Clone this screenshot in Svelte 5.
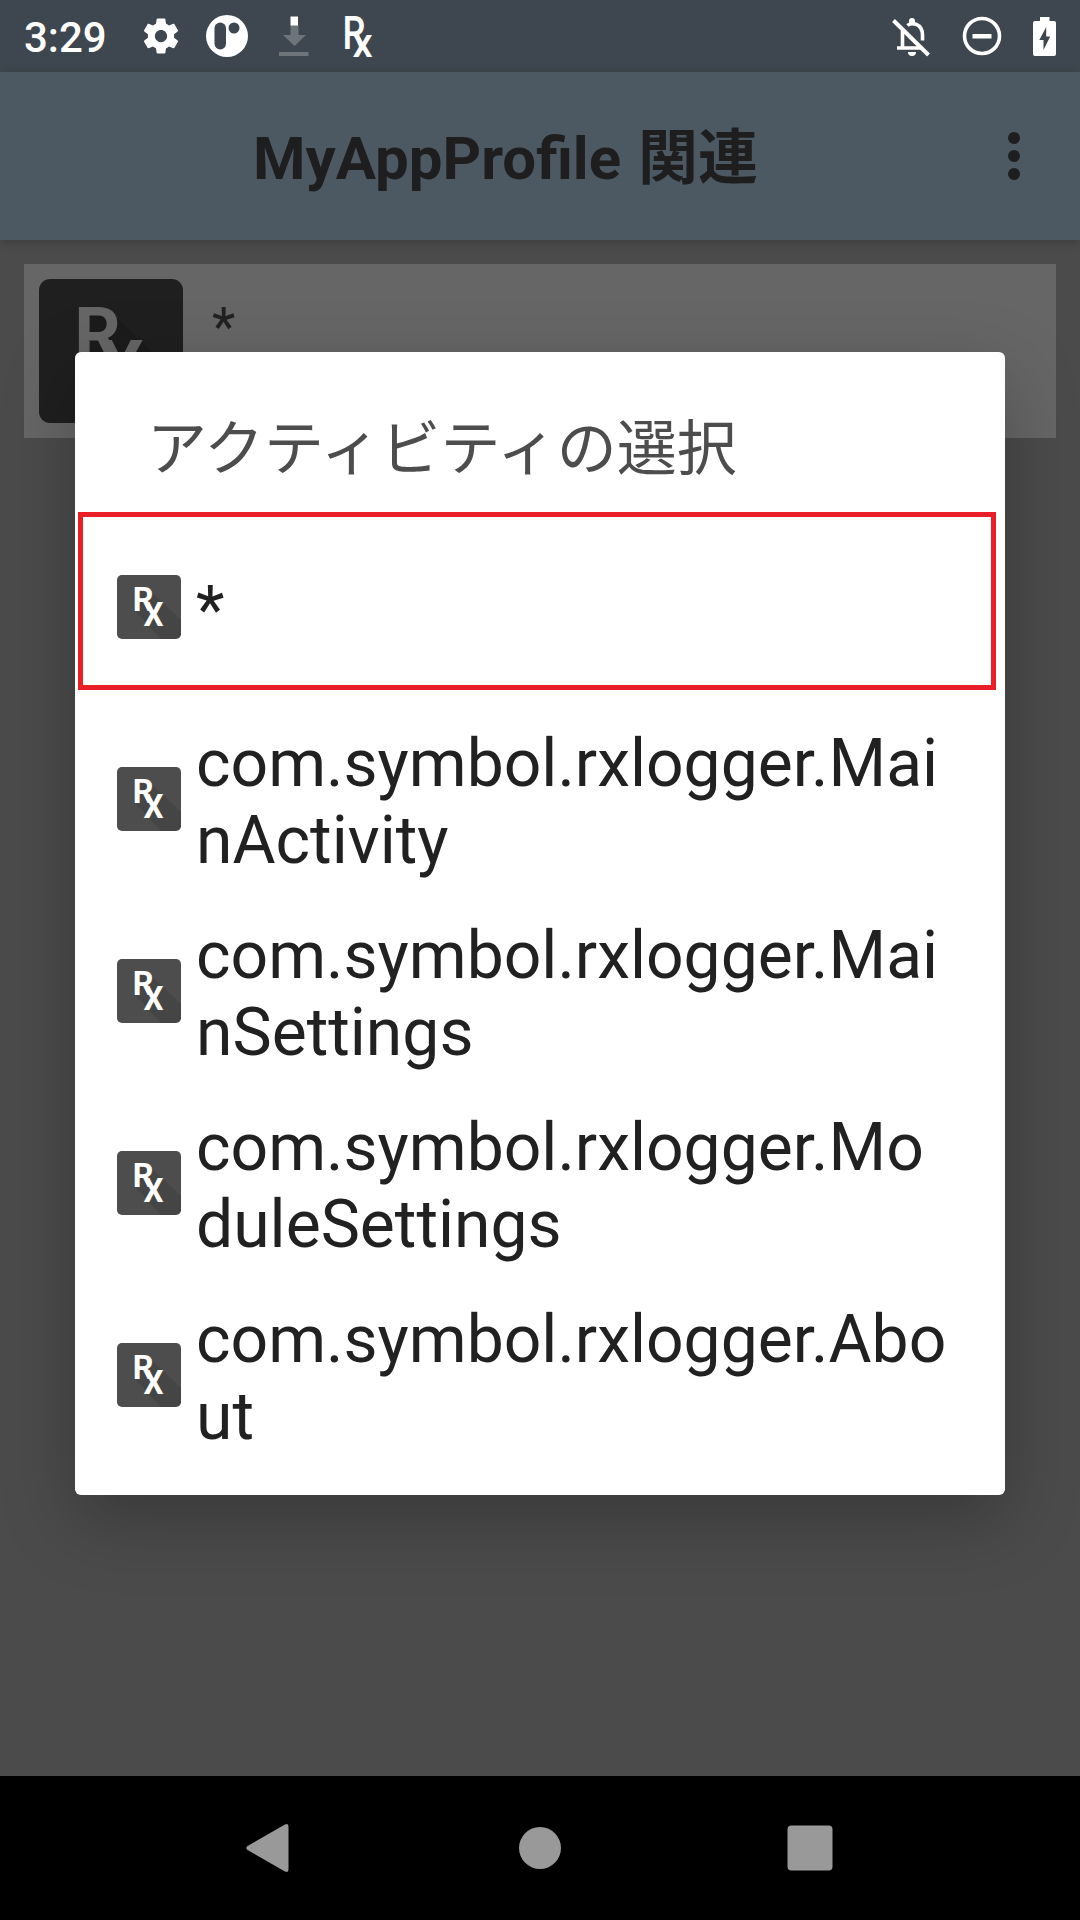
<script>
  const activities = [
    { lines: ['*'], selected: true },
    { lines: ['com.symbol.rxlogger.Mai', 'nActivity'] },
    { lines: ['com.symbol.rxlogger.Mai', 'nSettings'] },
    { lines: ['com.symbol.rxlogger.Mo', 'duleSettings'] },
    { lines: ['com.symbol.rxlogger.Abo', 'ut'] }
  ];
</script>

{#snippet rx()}
  <path class="rx-shade" d="M31 14 L64 45 V58 Q64 64 58 64 H44 L19 37 V14 Z" />
  <text class="rx-letter rx-r" transform="translate(15.700 36) scale(.98 1)">R</text>
  <text class="rx-letter rx-x" transform="translate(26.600 51) scale(.94 1)">X</text>
{/snippet}

<div class="screen">
  <header class="status">
    <span class="clock">3:29</span>
    <svg class="gear" width="42" height="42" viewBox="0 0 24 24"><path fill="#fff" d="M19.43 12.98c.04-.32.07-.64.07-.98s-.03-.66-.07-.98l2.11-1.65c.19-.15.24-.42.12-.64l-2-3.46c-.12-.22-.39-.3-.61-.22l-2.49 1c-.52-.4-1.08-.73-1.69-.98l-.38-2.65C14.46 2.18 14.25 2 14 2h-4c-.25 0-.46.18-.49.42l-.38 2.65c-.61.25-1.17.59-1.69.98l-2.49-1c-.23-.09-.49 0-.61.22l-2 3.46c-.13.22-.07.49.12.64l2.11 1.65c-.04.32-.07.65-.07.98s.03.66.07.98l-2.11 1.65c-.19.15-.24.42-.12.64l2 3.46c.12.22.39.3.61.22l2.49-1c.52.4 1.08.73 1.69.98l.38 2.65c.03.24.24.42.49.42h4c.25 0 .46-.18.49-.42l.38-2.65c.61-.25 1.17-.59 1.69-.98l2.49 1c.23.09.49 0 .61-.22l2-3.46c.12-.22.07-.49-.12-.64l-2.11-1.65zM12 15.5c-1.93 0-3.500-1.570-3.500-3.500s1.570-3.500 3.500-3.500 3.500 1.570 3.500 3.500-1.570 3.500-3.500 3.500z" /></svg>
    <svg class="pr" width="42" height="42" viewBox="0 0 42 42">
      <circle cx="21" cy="21" r="21" fill="#fff" />
      <rect x="8.500" y="7.500" width="11.500" height="27" rx="5.750" fill="#3e474f" />
      <circle cx="28" cy="13" r="5.500" fill="#3e474f" />
    </svg>
    <svg class="down" width="30" height="40" viewBox="0 0 30 40">
      <path fill="#6d747a" d="M11.500 9h8v10h7.500L15.500 30 4 19h7.500zM0 36h29.500v4H0z" />
      <path fill="#fff" d="M11.500 0.500h7.500v9h-7.500z" />
    </svg>
    <svg class="rx-status" width="30" height="44" viewBox="0 0 30 44">
      <text class="thin" transform="translate(-2.500 34.500) scale(.78 1)" font-size="47">R</text>
      <text class="thin" transform="translate(7.500 43) scale(.98 1)" font-size="41">x</text>
    </svg>
    <span class="grow"></span>
    <svg class="bell" width="38" height="40" viewBox="0 0 38 40">
      <g fill="none" stroke="#fff" stroke-width="3.600">
        <path d="M1.500 3.500 36.500 38" stroke-width="4" />
        <path d="M10.500 14V30M5 31H30M15.500 8.500Q19 5.500 24 7.200Q30.500 10 30.500 18V23.500" />
      </g>
      <circle cx="20" cy="4" r="3" fill="#fff" />
      <path fill="#fff" d="M16 35h8q0 4-4 4t-4-4z" />
    </svg>
    <svg class="dnd" width="40" height="40" viewBox="0 0 40 40"><circle cx="20" cy="20" r="17.500" fill="none" stroke="#fff" stroke-width="3.600" /><path fill="#fff" d="M10.500 18h19v4.500h-19z" /></svg>
    <svg class="battery" width="23" height="39" viewBox="0 0 23 39"><path fill="#fff" d="M7 0h9.500v4H21q2 0 2 2v31q0 2-2 2H2q-2 0-2-2V6q0-2 2-2h5z" /><path fill="#3e474f" d="M13.200 10v9.500h4L10.500 33V23H6.300z" /></svg>
  </header>

  <div class="appbar">
    <h1>MyAppProfile 関連</h1>
    <svg class="dots" width="12" height="48" viewBox="0 0 12 48"><g fill="#1e1e1e"><circle cx="6" cy="6" r="6" /><circle cx="6" cy="24" r="6" /><circle cx="6" cy="42" r="6" /></g></svg>
  </div>

  <main>
    <div class="card">
      <svg class="big" width="144" height="144" viewBox="0 0 64 64"><rect width="64" height="64" rx="5" fill="#1f1f1f" />{@render rx()}</svg>
      <span>*</span>
    </div>
  </main>

  <nav>
    <svg width="46" height="48" viewBox="0 0 46 48"><path fill="#999" d="M40 .5Q43.500-1 43.500 3V45Q43.500 49 40 47.500L2.500 26Q0 24 2.500 22z" /></svg>
    <svg class="home" width="42" height="42" viewBox="0 0 42 42"><circle cx="21" cy="21" r="21" fill="#999" /></svg>
    <svg width="46" height="46" viewBox="0 0 46 46"><rect x=".5" y=".5" width="45" height="45" rx="4" fill="#999" /></svg>
  </nav>

  <div class="dialog" role="dialog">
    <h2>アクティビティの選択</h2>
    <ul>
      {#each activities as item}
        <li class:selected={item.selected}>
          <svg width="64" height="64" viewBox="0 0 64 64"><rect width="64" height="64" rx="5" fill="#4d4d4d" />{@render rx()}</svg>
          <p>{#each item.lines as line}<span>{line}</span>{/each}</p>
        </li>
      {/each}
    </ul>
  </div>
</div>

<style>
  :global(body) { margin: 0; }
  * { box-sizing: border-box; }
  svg { display: block; flex: none; }
  .screen {
    position: relative;
    display: flex;
    flex-direction: column;
    width: 1080px;
    height: 1920px;
    overflow: hidden;
    background: #4b4b4b;
    font-family: Roboto, "Noto Sans CJK JP", sans-serif;
    color: #212121;
  }
  .status {
    display: flex;
    align-items: center;
    height: 72px;
    padding: 0 23px 0 24px;
    background: #3e474f;
    color: #fff;
  }
  .clock { width: 116px; font-size: 42px; font-weight: 500; line-height: 72px; padding-top: 3px; }
  .pr { margin-left: 24px; }
  .down { margin-left: 31px; }
  .rx-status { margin-left: 36px; overflow: visible; }
  .thin { font-weight: 500; fill: #fff; }
  .grow { flex: 1; }
  .bell { margin-top: 2px; }
  .dnd { margin-left: 32px; }
  .battery { margin-left: 31px; margin-right: 1px; }
  .appbar {
    display: flex;
    align-items: center;
    justify-content: space-between;
    height: 168px;
    padding: 0 60px 0 253px;
    background: #4c5963;
    box-shadow: 0 2px 10px rgba(0, 0, 0, .2);
    z-index: 1;
  }
  h1 { margin: 0; padding-top: 5px; font-size: 60px; font-weight: 700; line-height: 84px; word-spacing: 2px; white-space: nowrap; color: #1e1e1e; }
  main { flex: 1; padding: 24px; }
  .card { display: flex; height: 174px; padding: 15px; background: #666; }
  .card span { margin: 16px 0 0 29px; font-size: 54px; line-height: 63px; }
  .rx-letter { font-family: Roboto, sans-serif; font-weight: 700; fill: #fff; }
  .rx-r { font-size: 33px; }
  .rx-x { font-size: 33.5px; }
  .rx-shade { fill: #000; opacity: .1; }
  .big .rx-letter { fill: #666; }
  nav {
    display: flex;
    align-items: center;
    justify-content: space-between;
    height: 144px;
    padding: 0 247px 0 245px;
    background: #000;
  }
  .home { margin-left: 2px; }
  .dialog {
    position: absolute;
    z-index: 2;
    left: 75px;
    top: 352px;
    width: 930px;
    height: 1143px;
    border-radius: 6px;
    background: #fff;
    box-shadow: 0 24px 72px rgba(0, 0, 0, .25);
  }
  h2 { margin: 0; padding: 56px 0 0 72px; height: 160px; font-size: 60px; font-weight: 400; line-height: 84px; color: #4d4d4d; white-space: nowrap; }
  ul { margin: 0; padding: 0 9px 0 3px; list-style: none; }
  li { display: flex; align-items: center; height: 192px; padding-left: 39px; }
  li.selected { height: 178px; margin-bottom: 13px; padding: 12px 0 0 34px; border: 5px solid #e91e26; }
  p { margin: 0 0 0 15px; padding-top: 6px; font-size: 66px; line-height: 77px; }
  p span { display: block; white-space: nowrap; }
</style>
